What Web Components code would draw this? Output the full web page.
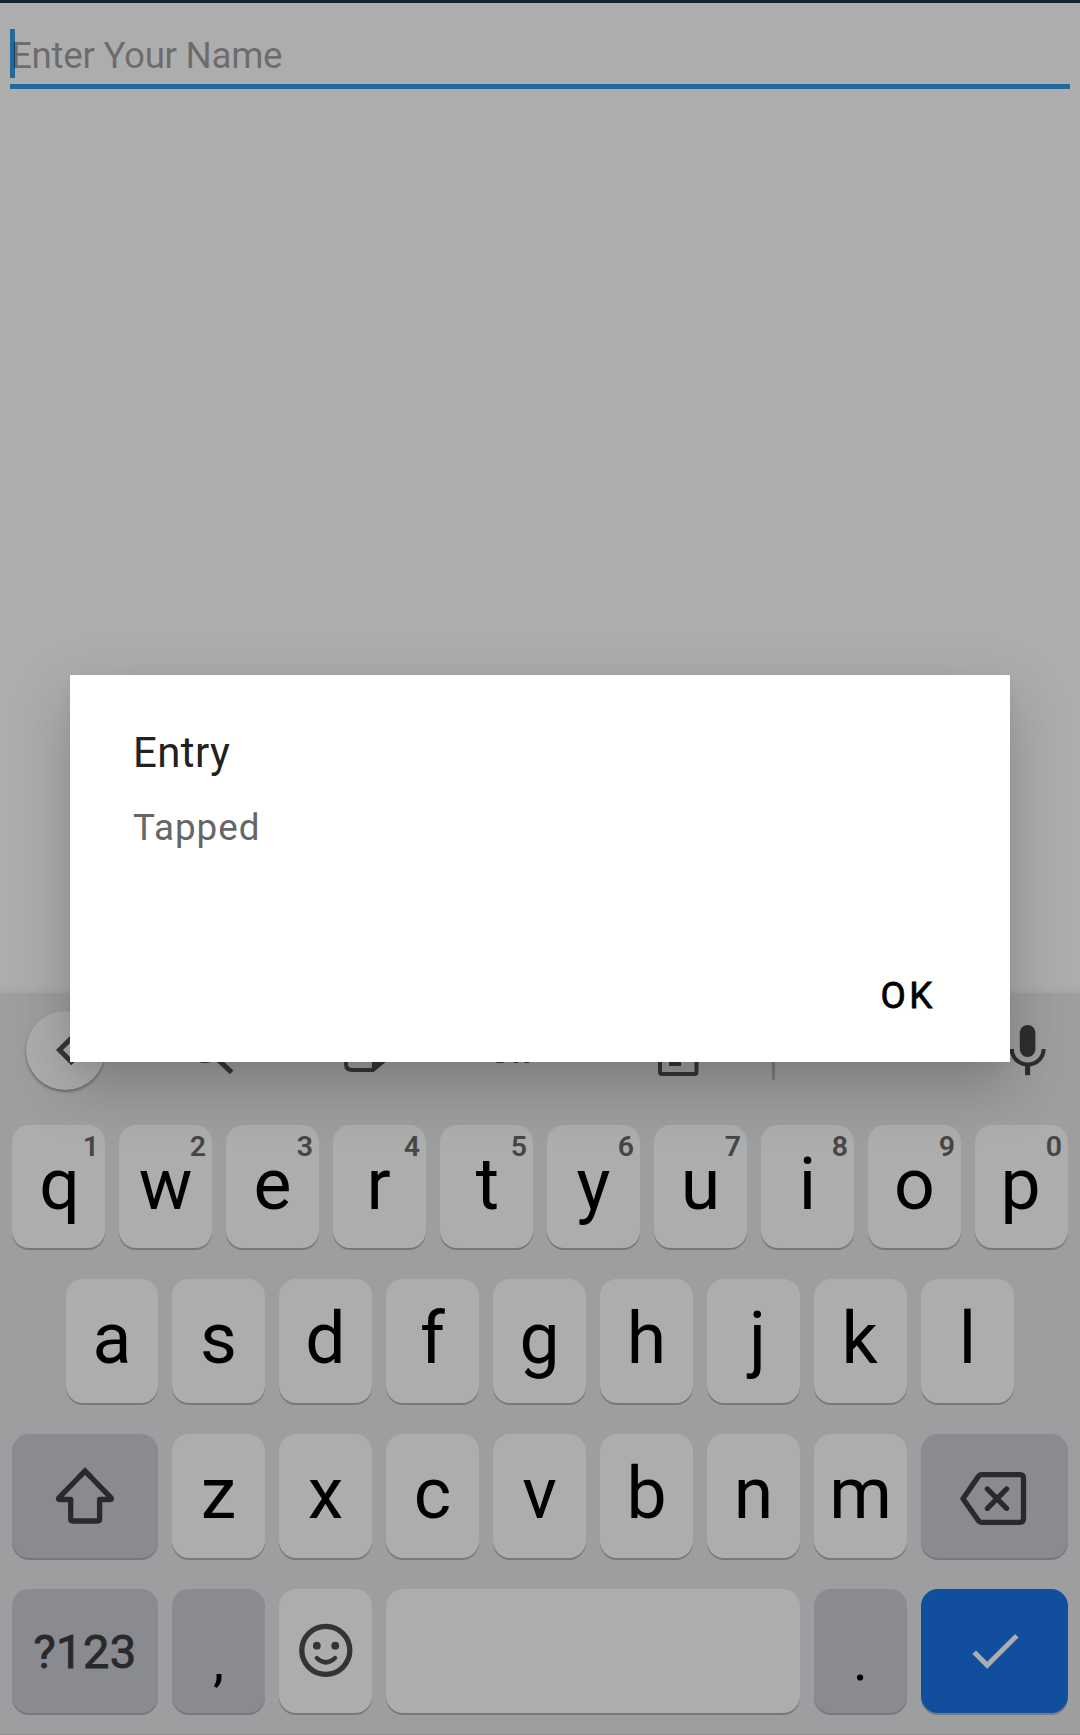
<!DOCTYPE html>
<html lang="en">
<head>
<meta charset="utf-8">
<title>Entry</title>
<style>
html,body{margin:0;padding:0}
body{width:1080px;height:1735px;overflow:hidden;background:#adadad;font-family:Roboto,sans-serif}
</style>
</head>
<body>
<app-screen></app-screen>
<script>
const define = (name, html, init) => {
  const t = document.createElement('template');
  t.innerHTML = html;
  customElements.define(name, class extends HTMLElement {
    constructor() {
      super();
      this.attachShadow({mode: 'open'}).append(t.content.cloneNode(true));
    }
    connectedCallback() { if (init) init(this, this.shadowRoot); }
  });
};

define('name-entry', `
<style>
:host{display:block;margin:26px 10px 0;height:55px;border-bottom:5px solid #226a9b}
.field{display:flex;height:49px;border-left:5px solid #226a9b}
span{font-size:36.75px;line-height:53px;letter-spacing:-.31px;color:rgba(0,0,0,.39);margin-left:-4px;white-space:nowrap}
</style><div class="field"><span><slot></slot></span></div>`);

define('alert-dialog', `
<style>
:host{position:absolute;left:70px;top:675px;width:940px;height:387px;background:#fff;display:flex;flex-direction:column;
box-sizing:border-box;padding:53px 63px 0;box-shadow:0 23px 56px rgba(0,0,0,.22),0 4px 12px rgba(0,0,0,.03)}
.title{font-size:42px;line-height:50px;letter-spacing:.39px;color:#212121}
.msg{font-size:36.75px;line-height:44px;letter-spacing:1px;color:#666;margin-top:28px}
.actions{display:flex;justify-content:flex-end;margin-top:124px;padding-right:11px}
.ok{font-size:36.75px;line-height:44px;letter-spacing:3.6px;-webkit-text-stroke:.8px #000;color:#000}
</style>
<div class="title"><slot name="title"></slot></div>
<div class="msg"><slot></slot></div>
<div class="actions"><span class="ok"><slot name="action"></slot></span></div>`);

define('key-cap', `
<style>
:host{display:block;position:relative;flex:0 0 93px;height:100%;border-radius:17px;background:#adadad;box-shadow:0 2px 0 #77787a;
text-align:center;color:#000;font-size:71.5px;line-height:119px}
:host([narrow]){flex-basis:92px}
:host([wide]){flex-basis:146px}
:host([wide][end]){flex-basis:147px}
:host([space]){flex:1 1 0}
:host([fn]){background:#8a8b91}
:host([enter]){background:#114f9e}
:host([text]){font-size:47px;letter-spacing:.4px;-webkit-text-stroke:.9px #29292b;line-height:126px;color:#29292b}
:host([punct]){font-size:56px;font-weight:400;line-height:145px}
:host([icon]){display:flex;align-items:center;justify-content:center}
.hint{position:absolute;top:0;right:6px;font-size:28.5px;line-height:43px;font-weight:600;color:#464646;text-indent:0}
</style><slot></slot><span class="hint"></span>`, (el, root) => {
  root.querySelector('.hint').textContent = el.getAttribute('hint') || '';
});

define('key-row', `
<style>:host{display:flex;justify-content:center;gap:14px;height:124px;margin-bottom:31px}
:host([first]){height:123px}</style><slot></slot>`);

define('key-toolbar', `
<style>
:host{display:flex;align-items:center;height:114px;margin-bottom:18px;padding:0 14px}
svg{display:block;overflow:visible;fill:none;stroke:#353638;flex:none}
.back{width:79px;height:79px;border-radius:50%;background:#adadad;box-shadow:0 2px 3px rgba(0,0,0,.35)}
.gif{width:54px;text-align:center;font-size:31px;line-height:34px;font-weight:700;color:#353638;letter-spacing:2px;margin:6px 0 0 96px}
.rule{width:3px;height:60px;background:#7b7c7e;margin-left:68px}
</style>
<div class="back"><svg width="78" height="78" viewBox="0 0 78 78" stroke-width="5"><path d="M47 25.5 33.5 39 47 52.5"/></svg></div>
<svg style="margin-left:77px" width="52" height="52" stroke-width="5"><circle cx="23" cy="22" r="14.5"/><path d="M32 32 49.7 48.3"/></svg>
<svg style="margin-left:106px" width="52" height="52" stroke-width="4"><path d="M33 46H12q-6 0-6-6V12q0-6 6-6h28q6 0 6 6v23z"/><path d="M32 48V34H47.5z" fill="#353638" stroke="none"/></svg>
<span class="gif">GIF</span>
<svg style="margin-left:110px" width="52" height="52" stroke-width="4"><rect x="8" y="6" width="36.5" height="44" rx="2"/><rect x="17" y="16" width="12" height="26" fill="#353638" stroke="none"/></svg>
<div class="rule"></div>
<svg style="margin-left:auto;stroke:#2d2e2e" width="52" height="52" stroke-width="4"><rect x="17.8" y="1" width="15.6" height="32" rx="7.8" fill="#2d2e2e" stroke="none"/><path d="M9.8 25a15.9 15.6 0 0 0 31.8 0"/><path d="M25.6 40V51.2" stroke-width="5"/></svg>`);

define('soft-keyboard', `
<style>
:host{display:block;margin-top:904px;height:742px;box-sizing:border-box;padding:0 12px;background:#9d9ea0;
box-shadow:0 -1px 8px rgba(0,0,0,.08),inset 0 -1px 0 #8d8e90}
svg{display:block;overflow:visible;fill:none;stroke:#2a2a2c;stroke-width:5.3;stroke-linejoin:round}
</style>
<key-toolbar></key-toolbar>
<key-row first id="top"></key-row>
<key-row id="home"></key-row>
<key-row>
<key-cap wide fn icon><svg width="60" height="60"><path d="M30 5 56.3 32.2q.6 1.3-1 1.3H44.6V53q0 2-2 2H17.7q-2 0-2-2V33.5H4.7q-1.6 0-1-1.3z"/><path d="M24 11.2 30 5l6 6.2" stroke-linejoin="miter"/></svg></key-cap>
<key-cap>z</key-cap><key-cap>x</key-cap><key-cap>c</key-cap><key-cap>v</key-cap><key-cap>b</key-cap><key-cap>n</key-cap><key-cap>m</key-cap>
<key-cap wide end fn icon><svg width="68" height="60" style="margin-right:2px"><path d="M21.5 8.7H60q3.5 0 3.5 3.5V52.8q0 3.5-3.5 3.5H21.5q-2 0-3.2-1.8L3 32.7 18.3 10.5q1.2-1.8 3.2-1.8z"/><path stroke-linecap="round" d="M27.4 23 46.6 42.3M46.6 23 27.4 42.3"/></svg></key-cap>
</key-row>
<key-row>
<key-cap wide fn text>?123</key-cap>
<key-cap fn punct>,</key-cap>
<key-cap icon><svg width="60" height="60" style="stroke:#343434"><circle cx="29.8" cy="29.3" r="24"/><circle cx="20.8" cy="24.7" r="3.9" fill="#343434" stroke="none"/><circle cx="39.2" cy="24.7" r="3.9" fill="#343434" stroke="none"/><path stroke-width="4.4" stroke-linecap="round" d="M20.8 37Q29.8 45.8 39 37"/></svg></key-cap>
<key-cap space></key-cap>
<key-cap fn punct>.</key-cap>
<key-cap wide end enter icon><svg width="60" height="60" style="stroke:#adadad;stroke-linejoin:miter;stroke-width:5"><path d="M9.2 31.2 22.2 44.3 51.8 14.7"/></svg></key-cap>
</key-row>`, (el, root) => {
  // Optical horizontal adjustment of narrow or asymmetric glyphs.
  const nudge = {q: 1, r: -1, t: 1, p: -1, j: 4, k: -1};
  const fill = (id, letters, hints) => [...letters].forEach((c, i) => {
    const k = document.createElement('key-cap');
    k.textContent = c;
    if (nudge[c]) k.style.textIndent = nudge[c] * 2 + 'px';
    if (hints) k.setAttribute('hint', hints[i]);
    if (c === 'a') k.setAttribute('narrow', '');
    root.getElementById(id).append(k);
  });
  fill('top', 'qwertyuiop', '1234567890');
  fill('home', 'asdfghjkl');
});

define('app-screen', `
<style>
:host{display:flow-root;position:relative;width:1080px;height:1735px;background:#adadad;overflow:hidden}
.bar{height:3px;background:#132331}
</style>
<div class="bar"></div>
<name-entry>Enter Your Name</name-entry>
<soft-keyboard></soft-keyboard>
<alert-dialog><span slot="title">Entry</span>Tapped<span slot="action">OK</span></alert-dialog>`);
</script>
</body>
</html>
